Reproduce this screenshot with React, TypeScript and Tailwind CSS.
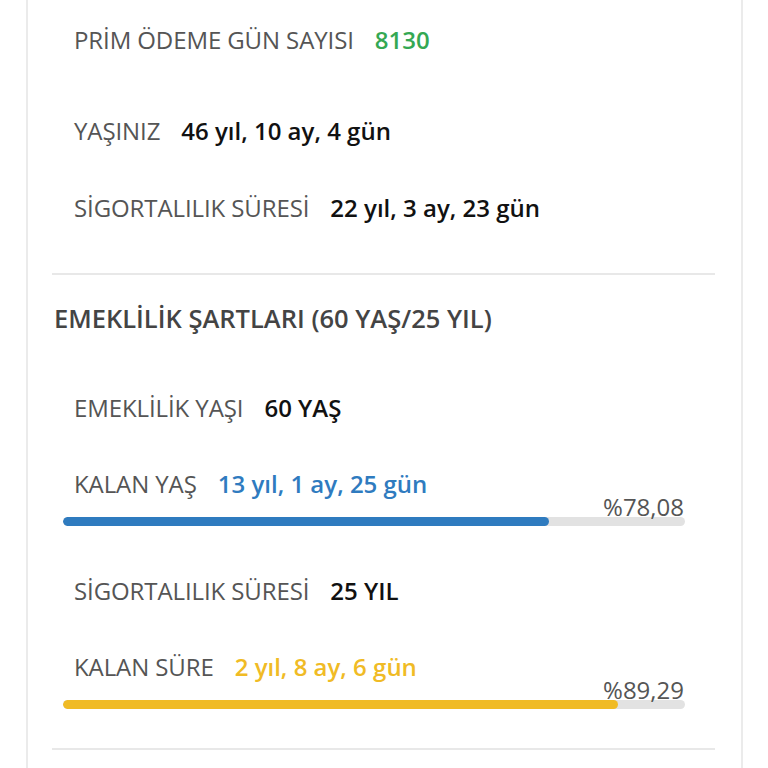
import React from "react";

const font = { fontFamily: '"Open Sans", "Noto Sans", sans-serif' };

function Row({
  label,
  value,
  valueClass,
  className,
}: {
  label: string;
  value: string;
  valueClass: string;
  className?: string;
}) {
  return (
    <div className={`flex items-baseline h-[30px] leading-[30px] pl-[46px] whitespace-nowrap ${className ?? ""}`}>
      <span className="text-[24px] text-[#555555] tracking-[-0.1px]">{label}</span>
      <span className={`ml-[21px] text-[24px] font-semibold ${valueClass}`}>{value}</span>
    </div>
  );
}

function Progress({
  pct,
  label,
  fill,
  className,
}: {
  pct: number;
  label: string;
  fill: string;
  className?: string;
}) {
  return (
    <div className={`ml-[35px] w-[622px] ${className ?? ""}`}>
      <div className="h-[20px] leading-[20px] text-right text-[24px] text-[#555555] pr-[1px]">
        {label}
      </div>
      <div className="h-[9px] rounded-full bg-[#e2e2e2] overflow-hidden">
        <div className={`h-full rounded-full ${fill}`} style={{ width: `${pct}%` }} />
      </div>
    </div>
  );
}

export default function App() {
  return (
    <div className="bg-white min-h-screen w-[768px]" style={font}>
      <div className="ml-[26px] w-[717px] min-h-[768px] border-x-2 border-[#ebebeb] overflow-hidden">
        <Row label="PRİM ÖDEME GÜN SAYISI" value="8130" valueClass="text-[#34a853] font-normal" className="mt-[25px]" />
        <Row label="YAŞINIZ" value="46 yıl, 10 ay, 4 gün" valueClass="text-[#111111]" className="mt-[61px]" />
        <Row label="SİGORTALILIK SÜRESİ" value="22 yıl, 3 ay, 23 gün" valueClass="text-[#111111]" className="mt-[47px]" />

        <div className="mt-[50px] ml-[24px] w-[663px] h-[2px] bg-[#e8e8e8]" />

        <div className="mt-[28px] pl-[26px] h-[30px] leading-[30px] text-[25.5px] font-semibold text-[#444444] whitespace-nowrap">
          EMEKLİLİK ŞARTLARI (60 YAŞ/25 YIL)
        </div>

        <Row label="EMEKLİLİK YAŞI" value="60 YAŞ" valueClass="text-[#111111]" className="mt-[60px]" />
        <Row label="KALAN YAŞ" value="13 yıl, 1 ay, 25 gün" valueClass="text-[#2f7bbf] font-normal" className="mt-[46px]" />
        <Progress pct={78.08} label="%78,08" fill="bg-[#2f7bbf]" className="-mt-[2px]" />

        <Row label="SİGORTALILIK SÜRESİ" value="25 YIL" valueClass="text-[#111111]" className="mt-[50px]" />
        <Row label="KALAN SÜRE" value="2 yıl, 8 ay, 6 gün" valueClass="text-[#f0bb25] font-normal" className="mt-[46px]" />
        <Progress pct={89.29} label="%89,29" fill="bg-[#f0bb25]" className="-mt-[2px]" />

        <div className="mt-[39px] ml-[24px] w-[663px] h-[2px] bg-[#e8e8e8]" />
      </div>
    </div>
  );
}
